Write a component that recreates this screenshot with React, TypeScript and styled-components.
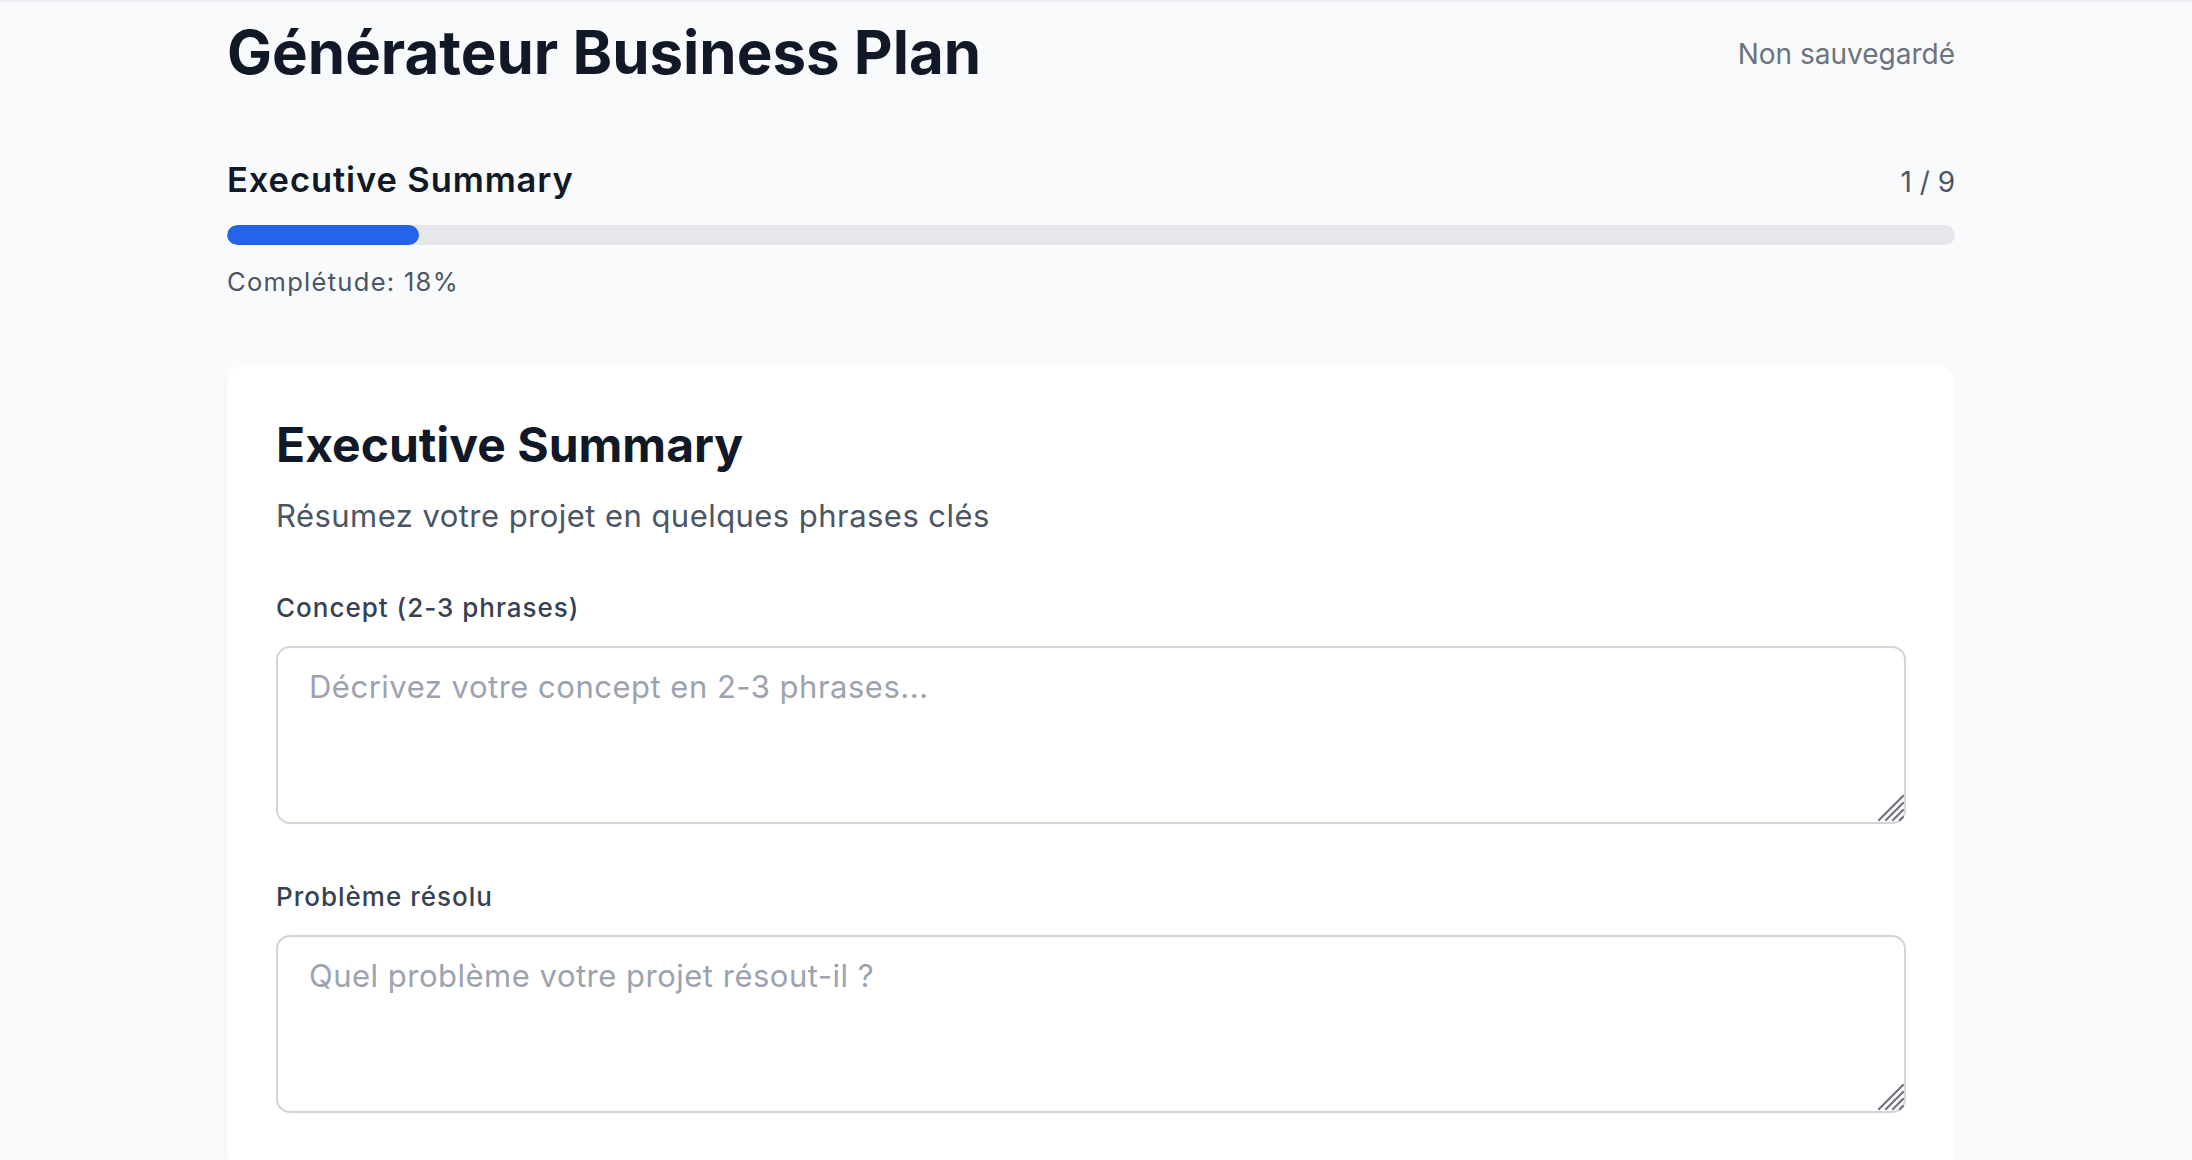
import styled, { createGlobalStyle } from 'styled-components';

const GlobalStyle = createGlobalStyle`
  html, body {
    margin: 0;
    padding: 0;
    background: #f9fafb;
  }
  body {
    font-family: Inter, "Noto Sans", "Liberation Sans", sans-serif;
    color: #111827;
    border-top: 2px solid #eff1f4;
  }
  * {
    box-sizing: border-box;
  }
`;

const Page = styled.div`
  padding: 20px 10px 0 0;
  min-height: 1158px;
`;

const Container = styled.div`
  max-width: 1728px;
  margin: 0 auto;
`;

const Header = styled.header`
  display: flex;
  justify-content: space-between;
  align-items: center;
`;

const Title = styled.h1`
  margin: 0;
  font-size: 60px;
  line-height: 60px;
  font-weight: 700;
  color: #111827;
`;

const SaveStatus = styled.span`
  margin-top: 3px;
  font-size: 28px;
  line-height: 42px;
  color: #6b7280;
`;

const Progress = styled.section`
  margin-top: 75px;
`;

const ProgressHead = styled.div`
  display: flex;
  justify-content: space-between;
  align-items: baseline;
`;

const StepName = styled.h2`
  margin: 0;
  font-size: 34.5px;
  line-height: 46px;
  font-weight: 600;
  letter-spacing: 0.9px;
  color: #111827;
`;

const StepCount = styled.span`
  font-size: 28px;
  line-height: 46px;
  color: #4b5563;
`;

const Track = styled.div`
  margin-top: 20px;
  height: 20px;
  border-radius: 999px;
  background: #e5e7eb;
  overflow: hidden;
`;

const Fill = styled.div`
  height: 100%;
  border-radius: 999px;
  background: #2563eb;
`;

const Completion = styled.p`
  margin: 19px 0 0;
  font-size: 25.5px;
  line-height: 36px;
  letter-spacing: 1.3px;
  color: #4b5563;
`;

const Card = styled.section`
  margin-top: 64px;
  background: #ffffff;
  border-radius: 20px;
  padding: 52px 49px 60px;
  box-shadow: 0 1px 3px rgba(15, 23, 42, 0.04);
`;

const CardTitle = styled.h2`
  margin: 0;
  font-size: 48px;
  line-height: 58px;
  font-weight: 700;
  color: #111827;
`;

const CardSubtitle = styled.p`
  margin: 19px 0 0;
  font-size: 31px;
  line-height: 46px;
  letter-spacing: 0.45px;
  color: #4b5563;
`;

const Fields = styled.div`
  margin-top: 51px;
  display: flex;
  flex-direction: column;
  gap: 55px;
`;

const Field = styled.div`
  display: flex;
  flex-direction: column;
`;

const Label = styled.label`
  font-size: 26px;
  line-height: 36px;
  font-weight: 500;
  letter-spacing: 1px;
  color: #374151;
`;

const InputBox = styled.div`
  position: relative;
  margin-top: 20px;
`;

const TextArea = styled.textarea`
  display: block;
  width: 100%;
  height: 178px;
  padding: 16px 31px;
  border: 2px solid #d1d5db;
  border-radius: 14px;
  font-family: inherit;
  font-size: 31px;
  line-height: 45px;
  letter-spacing: 0.5px;
  color: #111827;
  background: #ffffff;
  resize: none;
  outline: none;

  &::placeholder {
    color: #9ca3af;
  }
`;

const Grip = styled.svg`
  position: absolute;
  right: 2px;
  bottom: 2px;
  width: 28px;
  height: 28px;
  pointer-events: none;
`;

const ResizeGrip = () => (
  <Grip viewBox="0 0 28 28" aria-hidden="true">
    <g stroke="#6e727a" strokeWidth="2" strokeLinecap="square">
      <line x1="3" y1="26" x2="27" y2="2" />
      <line x1="10" y1="26" x2="27" y2="9" />
      <line x1="17" y1="26" x2="27" y2="16" />
      <line x1="24" y1="26" x2="27" y2="23" />
    </g>
  </Grip>
);

const fields = [
  { id: 'concept', label: 'Concept (2-3 phrases)', placeholder: 'Décrivez votre concept en 2-3 phrases...' },
  { id: 'probleme', label: 'Problème résolu', placeholder: 'Quel problème votre projet résout-il ?' },
];

export default function App() {
  const step = 1;
  const total = 9;

  return (
    <>
      <GlobalStyle />
      <Page>
        <Container>
          <Header>
            <Title>Générateur Business Plan</Title>
            <SaveStatus>Non sauvegardé</SaveStatus>
          </Header>

          <Progress>
            <ProgressHead>
              <StepName>Executive Summary</StepName>
              <StepCount>
                {step} / {total}
              </StepCount>
            </ProgressHead>
            <Track>
              <Fill style={{ width: `${(step / total) * 100}%` }} />
            </Track>
            <Completion>Complétude: 18%</Completion>
          </Progress>

          <Card>
            <CardTitle>Executive Summary</CardTitle>
            <CardSubtitle>Résumez votre projet en quelques phrases clés</CardSubtitle>
            <Fields>
              {fields.map((f) => (
                <Field key={f.id}>
                  <Label htmlFor={f.id}>{f.label}</Label>
                  <InputBox>
                    <TextArea id={f.id} placeholder={f.placeholder} />
                    <ResizeGrip />
                  </InputBox>
                </Field>
              ))}
            </Fields>
          </Card>
        </Container>
      </Page>
    </>
  );
}
